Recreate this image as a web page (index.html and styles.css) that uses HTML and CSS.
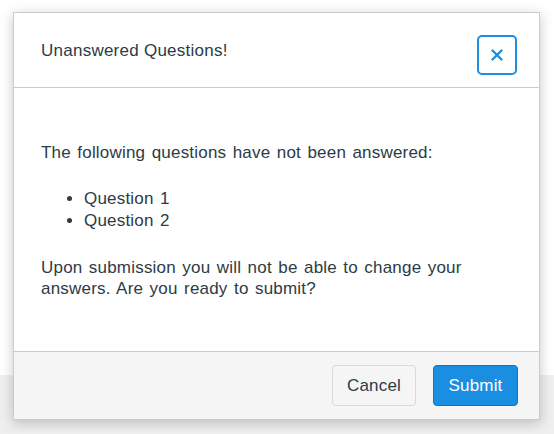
FILE: index.html
```html
<!DOCTYPE html>
<html>
<head>
<meta charset="utf-8">
<link rel="stylesheet" href="styles.css">
</head>
<body>
<div class="backdrop">
  <div class="dialog">
    <div class="header">
      <h2 class="title">Unanswered Questions!</h2>
      <button class="close" aria-label="Close">
        <svg width="12" height="12" viewBox="0 0 12 12"><path d="M1.5 1.5 L10.5 10.5 M10.5 1.5 L1.5 10.5" stroke="#1d8ee0" stroke-width="2.4" stroke-linecap="round" fill="none"/></svg>
      </button>
    </div>
    <div class="body">
      <p class="lead">The following questions have not been answered:</p>
      <ul class="list">
        <li>Question 1</li>
        <li>Question 2</li>
      </ul>
      <p class="warn">Upon submission you will not be able to change your answers. Are you ready to submit?</p>
    </div>
    <div class="footer">
      <button class="btn cancel">Cancel</button>
      <button class="btn submit">Submit</button>
    </div>
  </div>
</div>
</body>
</html>
```
FILE: styles.css
```css
html, body {
  margin: 0;
  padding: 0;
}
body {
  width: 554px;
  height: 434px;
  overflow: hidden;
  background: linear-gradient(to bottom, #ffffff 0, #ffffff 375px, #efefef 375px, #efefef 100%);
  font-family: "Liberation Sans", Arial, sans-serif;
  color: #2d3b45;
}
.backdrop {
  padding: 12px 0 0 13px;
}
.dialog {
  width: 527px;
  height: 408px;
  box-sizing: border-box;
  background: #ffffff;
  border: 1px solid #c7cdd1;
  box-shadow: 0 3px 12px rgba(0, 0, 0, 0.22);
  display: flex;
  flex-direction: column;
}
.header {
  height: 75px;
  box-sizing: border-box;
  border-bottom: 1px solid #c7cdd1;
  display: flex;
  align-items: center;
  justify-content: space-between;
  padding: 0 22px 0 27px;
}
.title {
  margin: 2px 0 0 0;
  font-size: 17px;
  letter-spacing: 0.25px;
  font-weight: normal;
  line-height: 20px;
}
.close {
  width: 40px;
  height: 40px;
  box-sizing: border-box;
  border: 2px solid #1d8ee0;
  border-radius: 5px;
  background: #ffffff;
  display: flex;
  align-items: center;
  justify-content: center;
  padding: 0;
  margin-top: 10px;
}
.body {
  flex: 1;
  padding: 54px 27px 0 27px;
  font-size: 17px;
  letter-spacing: 0.2px;
  word-spacing: 1.5px;
  line-height: 21px;
}
.lead {
  margin: 0 0 25px 0;
}
.list {
  margin: 0 0 25px 0;
  padding-left: 43px;
  line-height: 22px;
}
.warn {
  margin: 0;
}
.footer {
  height: 68px;
  box-sizing: border-box;
  border-top: 1px solid #c7cdd1;
  background: #f5f5f5;
  display: flex;
  align-items: center;
  justify-content: flex-end;
  gap: 17px;
  padding: 0 21px 0 0;
}
.btn {
  height: 41px;
  box-sizing: border-box;
  border-radius: 4px;
  font-family: "Liberation Sans", Arial, sans-serif;
  font-size: 17px;
  letter-spacing: 0.2px;
  padding: 0;
}
.cancel {
  width: 84px;
  background: #f5f5f5;
  border: 1px solid #d7dadc;
  color: #2d3b45;
}
.submit {
  width: 85px;
  background: #1a8ee0;
  border: 1px solid #0f76bd;
  color: #ffffff;
}
```
